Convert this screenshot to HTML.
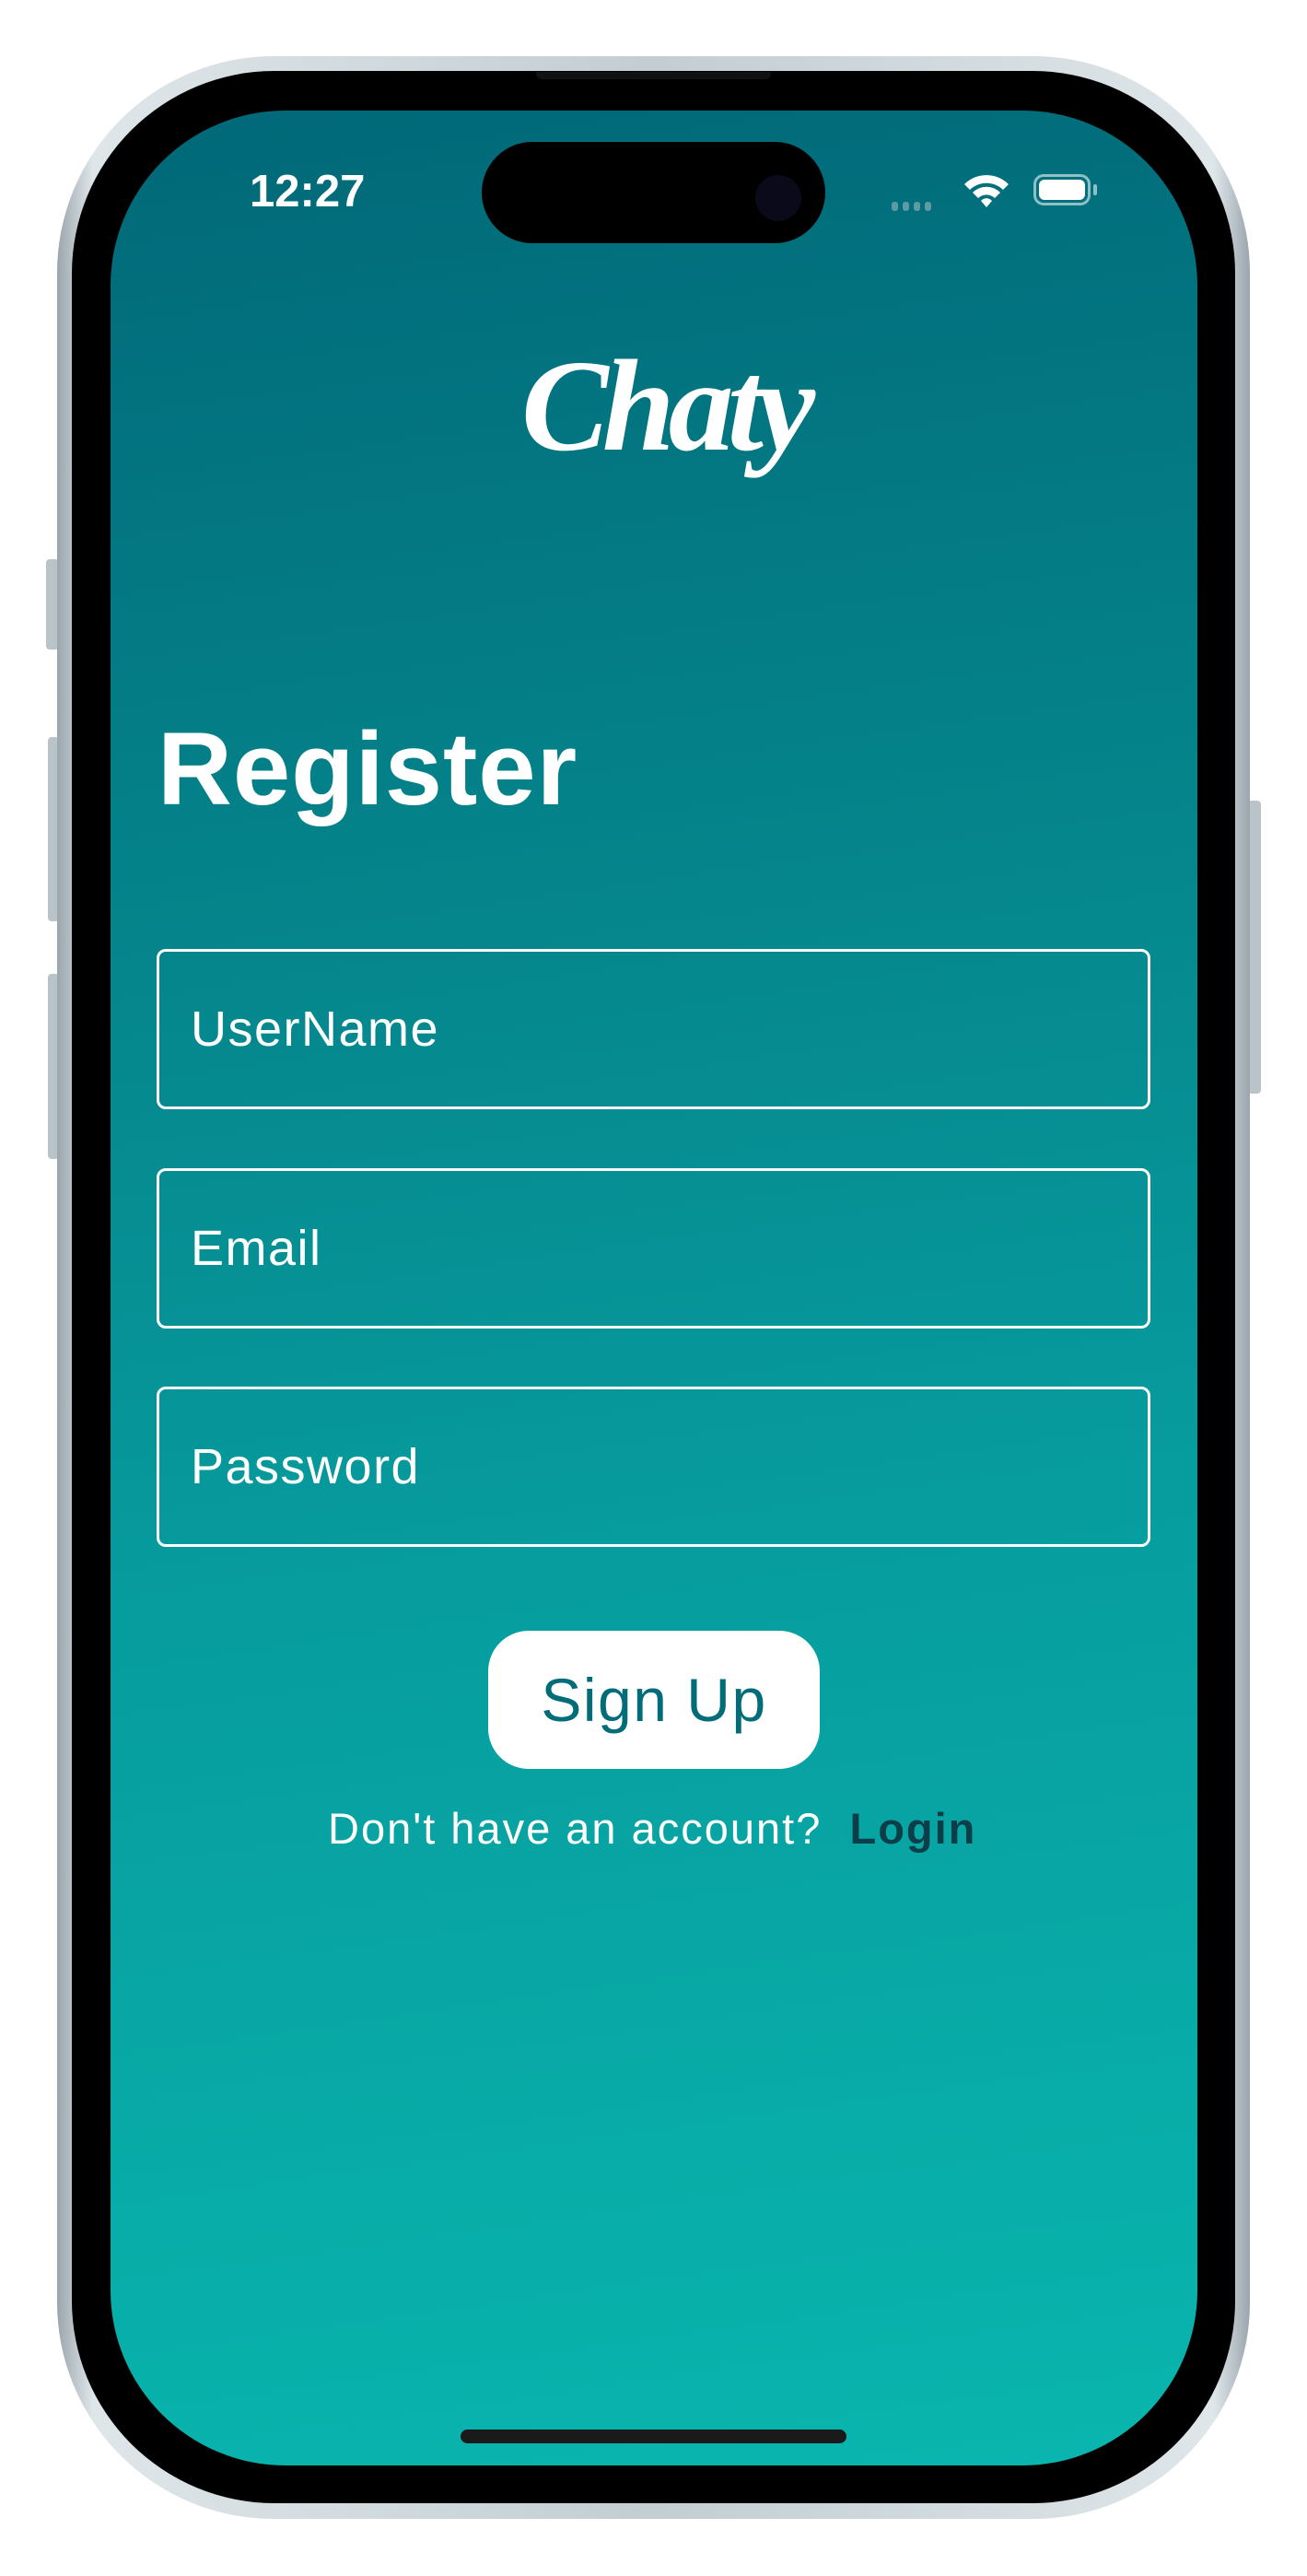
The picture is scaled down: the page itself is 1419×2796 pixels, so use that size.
<!DOCTYPE html>
<html><head><meta charset="utf-8"><style>
html,body{margin:0;padding:0;background:#fff;}
body{width:1419px;height:2796px;position:relative;overflow:hidden;font-family:"Liberation Sans",sans-serif;}
.frame{position:absolute;left:62px;top:61px;width:1295px;height:2673px;border-radius:235px;background:linear-gradient(90deg,#9aa6ac,#dfe6ea 3%,#c3cdd2 50%,#dfe6ea 97%,#9aa6ac);}
.bezel{position:absolute;left:78px;top:77px;width:1263px;height:2640px;border-radius:220px;background:#000;}
.btn{position:absolute;background:#b9c4c9;border-radius:4px;}
.screen{position:absolute;left:120px;top:120px;width:1180px;height:2556px;border-radius:190px;overflow:hidden;background:linear-gradient(172deg,#016878 0%,#05868c 35%,#079c9e 60%,#09b6ae 100%);}
.island{position:absolute;left:523px;top:154px;width:373px;height:110px;border-radius:55px;background:#000;}
.t{position:absolute;color:#fff;white-space:nowrap;}
.field{position:absolute;left:170px;width:1079px;height:174px;border:3px solid #fff;border-radius:10px;box-sizing:border-box;}
.field span{position:absolute;left:34px;top:50%;transform:translateY(-50%);color:#fff;font-size:54px;letter-spacing:1.5px;}
</style></head><body>
<div class="btn" style="left:50px;top:607px;width:14px;height:98px"></div>
<div class="btn" style="left:52px;top:800px;width:12px;height:200px"></div>
<div class="btn" style="left:52px;top:1057px;width:12px;height:201px"></div>
<div class="btn" style="left:1355px;top:869px;width:14px;height:318px"></div>
<div class="frame"></div>
<div class="bezel"></div>
<div style="position:absolute;left:582px;top:78px;width:255px;height:8px;background:#111;border-radius:0 0 6px 6px"></div>
<div class="screen"></div>
<div class="island"></div>
<div style="position:absolute;left:820px;top:190px;width:50px;height:50px;border-radius:50%;background:#0a0a1a"></div>
<div class="t" style="left:271px;top:180px;font-size:49px;font-weight:bold;">12:27</div>
<div style="position:absolute;left:968px;top:216px;">
<span style="display:inline-block;width:7px;height:10px;background:#5e9aa4;border-radius:3px;margin-right:5px"></span><span style="display:inline-block;width:7px;height:10px;background:#5e9aa4;border-radius:3px;margin-right:5px"></span><span style="display:inline-block;width:7px;height:10px;background:#5e9aa4;border-radius:3px;margin-right:5px"></span><span style="display:inline-block;width:7px;height:10px;background:#5e9aa4;border-radius:3px"></span></div>
<svg style="position:absolute;left:1045px;top:188px" width="52" height="40" viewBox="0 0 52 40"><path d="M2 12 A34 34 0 0 1 50 12 L44 18 A26 26 0 0 0 8 18Z M11 21 A21 21 0 0 1 41 21 L35 27 A13 13 0 0 0 17 27Z M20 30 A8 8 0 0 1 32 30 L26 37Z" fill="#fff"/></svg>
<div style="position:absolute;left:1122px;top:189px;width:62px;height:34px;border:3px solid #8fc0c6;border-radius:11px;box-sizing:border-box;padding:3px"><div style="width:100%;height:100%;background:#fff;border-radius:6px"></div></div>
<div style="position:absolute;left:1187px;top:200px;width:4px;height:12px;background:#8fc0c6;border-radius:2px"></div>
<div class="t" style="left:566px;top:358px;font-family:'Liberation Serif',serif;font-style:italic;font-weight:bold;font-size:142px;letter-spacing:-7px;">Chaty</div>
<div class="t" style="left:171px;top:770px;font-size:112px;font-weight:bold;letter-spacing:1px;">Register</div>
<div class="field" style="top:1030px"><span>UserName</span></div>
<div class="field" style="top:1268px"><span>Email</span></div>
<div class="field" style="top:1505px"><span>Password</span></div>
<div style="position:absolute;left:530px;top:1770px;width:360px;height:150px;background:#fff;border-radius:44px;color:#026d78;font-size:66px;text-align:center;line-height:150px;letter-spacing:1.5px">Sign Up</div>
<div class="t" style="left:356px;top:1957px;font-size:47px;letter-spacing:2px">Don't have an account? &nbsp;<b style="color:#0c3e4a">Login</b></div>
<div style="position:absolute;left:500px;top:2637px;width:419px;height:15px;background:#1a1a1a;border-radius:8px"></div>
</body></html>
